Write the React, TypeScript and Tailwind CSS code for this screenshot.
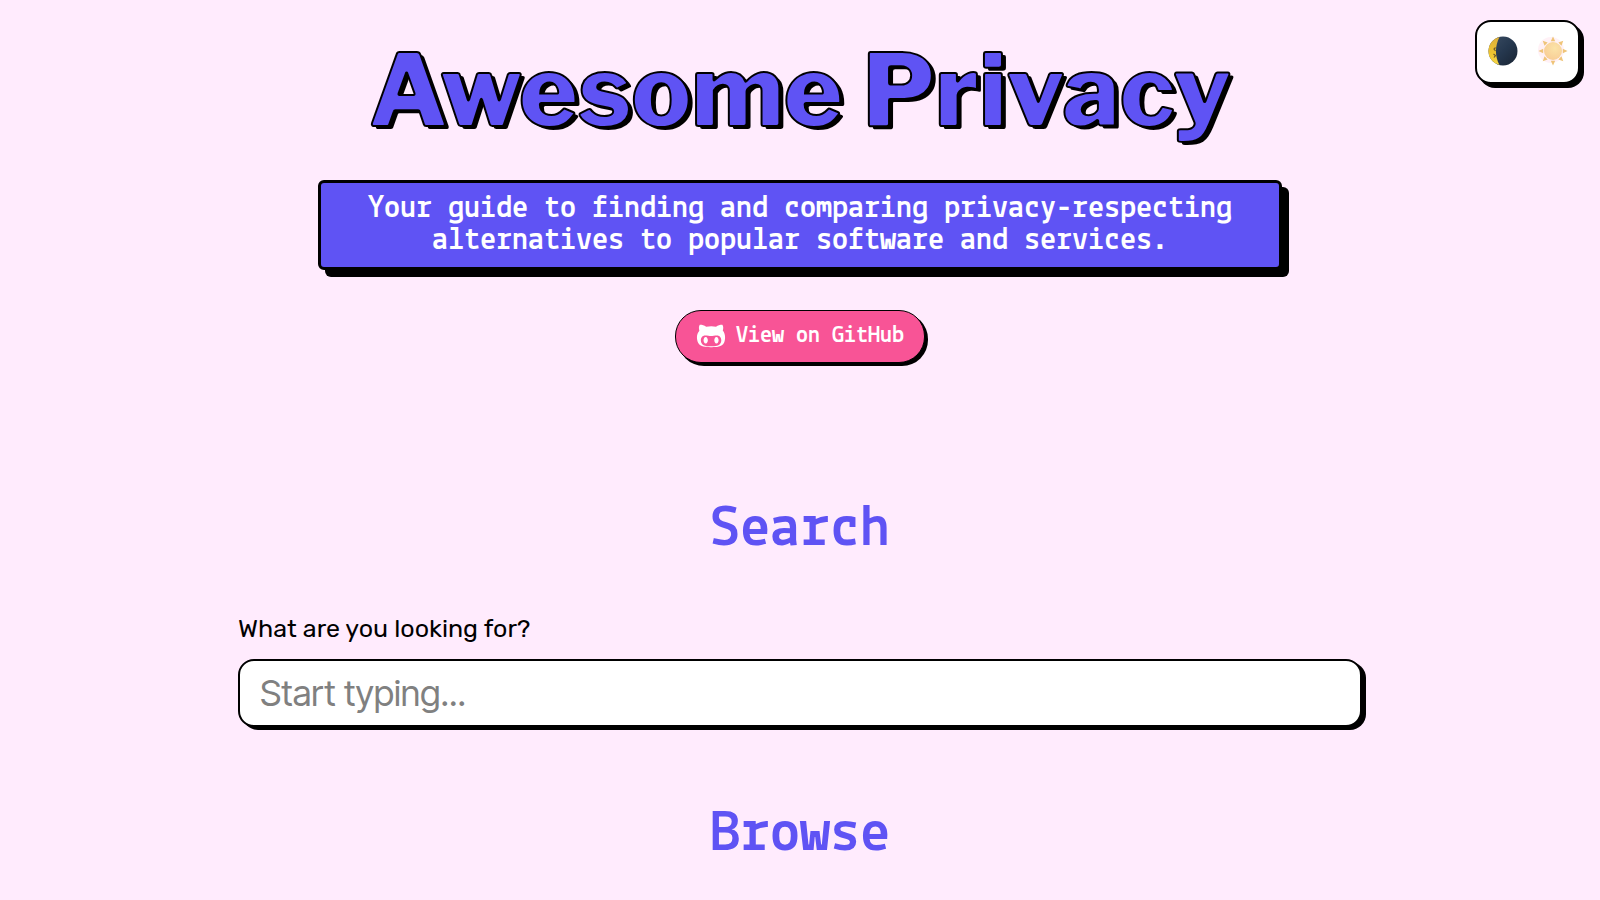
import { FaGithubAlt } from "react-icons/fa";

const RAYS = [0, 45, 90, 135, 180, 225, 270, 315];

function MoonIcon() {
  return (
    <svg viewBox="0 0 30 30" className="size-[30px]" aria-hidden="true">
      <defs>
        <linearGradient id="moon-shade" x1="0" y1="0" x2="1" y2="1">
          <stop offset="0" stopColor="#3a4d63" />
          <stop offset="0.5" stopColor="#26384f" />
          <stop offset="1" stopColor="#182332" />
        </linearGradient>
        <linearGradient id="moon-lit" x1="0" y1="0" x2="0" y2="1">
          <stop offset="0" stopColor="#dcae3c" />
          <stop offset="0.6" stopColor="#efc52f" />
          <stop offset="1" stopColor="#f7d84a" />
        </linearGradient>
      </defs>
      <circle cx="15" cy="15" r="14.5" fill="url(#moon-shade)" />
      <path d="M11.5 0.9A14.5 14.5 0 0 0 11.5 29.1C6.8 20 6.8 10 11.5 0.9Z" fill="url(#moon-lit)" />
      <path
        d="M7.5 11.5l-1.5 1.5 1.5 2M5.5 18l2 1.5-1.5 2"
        fill="none"
        stroke="#6e5a2c"
        strokeWidth="1.2"
      />
    </svg>
  );
}

function SunIcon() {
  return (
    <svg viewBox="0 0 30 30" className="size-[30px]" aria-hidden="true">
      <defs>
        <radialGradient id="sun-core" cx="0.6" cy="0.35" r="0.75">
          <stop offset="0" stopColor="#fbe3a8" />
          <stop offset="1" stopColor="#f8cb94" />
        </radialGradient>
      </defs>
      <circle cx="13" cy="14" r="13" fill="#fff1f6" />
      {RAYS.map((angle) => (
        <path
          key={angle}
          d="M15 0.5L17.2 5.2L12.8 5.2Z"
          fill="#efc478"
          transform={`rotate(${angle} 15 15)`}
        />
      ))}
      <circle cx="15" cy="15" r="9" fill="url(#sun-core)" />
    </svg>
  );
}

function ThemeToggle() {
  return (
    <button
      type="button"
      aria-label="Toggle theme"
      className="absolute top-5 right-5 flex h-16 w-[105px] items-center justify-between rounded-2xl border-2 border-black bg-white pr-2.5 pb-0.5 pl-[11px] shadow-[4px_4px_0_#000]"
    >
      <MoonIcon />
      <SunIcon />
    </button>
  );
}

function SectionTitle({ children }: { children: string }) {
  return (
    <h2 className="text-center font-[Lekton,'DejaVu_Sans_Mono',monospace] text-6xl leading-[60px] font-bold text-[#5f53f4]">
      {children}
    </h2>
  );
}

export default function App() {
  return (
    <div className="relative min-h-screen bg-[#ffebfd] px-6 pt-[30px] text-black">
      <ThemeToggle />
      <header className="flex flex-col items-center">
        <h1 className="text-center font-['Libre_Franklin',Inter,sans-serif] text-[100px] leading-[120px] font-extrabold text-[#5f53f4] [-webkit-text-stroke:2px_#000] [text-shadow:4px_3px_0_#000]">
          Awesome Privacy
        </h1>
        <p className="mt-[30px] w-full max-w-[964px] rounded-md border-[3px] border-black bg-[#5f53f4] px-10 py-2.5 text-center font-[Lekton,'DejaVu_Sans_Mono',monospace] text-[32px] leading-8 font-bold text-white shadow-[7px_7px_0_#000]">
          Your guide to finding and comparing privacy-respecting alternatives to popular software and services.
        </p>
        <a
          href="https://github.com/lissy93/awesome-privacy"
          className="mt-10 flex h-[53px] items-center gap-2.5 rounded-[26px] border border-black bg-[#f85496] px-5 pb-0.5 font-[Lekton,'DejaVu_Sans_Mono',monospace] text-2xl font-bold text-white shadow-[3px_3px_0_#000]"
        >
          <FaGithubAlt className="size-[30px]" />
          View on GitHub
        </a>
      </header>
      <main className="mx-auto max-w-[1124px]">
        <section className="pt-[137px]">
          <SectionTitle>Search</SectionTitle>
          <form className="mt-[53px]">
            <label htmlFor="search" className="block font-[Rubik,Roboto,sans-serif] text-[25px] leading-8">
              What are you looking for?
            </label>
            <input
              id="search"
              type="text"
              placeholder="Start typing..."
              className="mt-[14px] h-[68px] w-full rounded-2xl border-2 border-black bg-white px-5 font-['Inter_Tight',Inter,sans-serif] text-4xl shadow-[4px_3px_0_#000] outline-none placeholder:text-[#808080]"
            />
          </form>
        </section>
        <section className="pt-[78px]">
          <SectionTitle>Browse</SectionTitle>
        </section>
      </main>
    </div>
  );
}
